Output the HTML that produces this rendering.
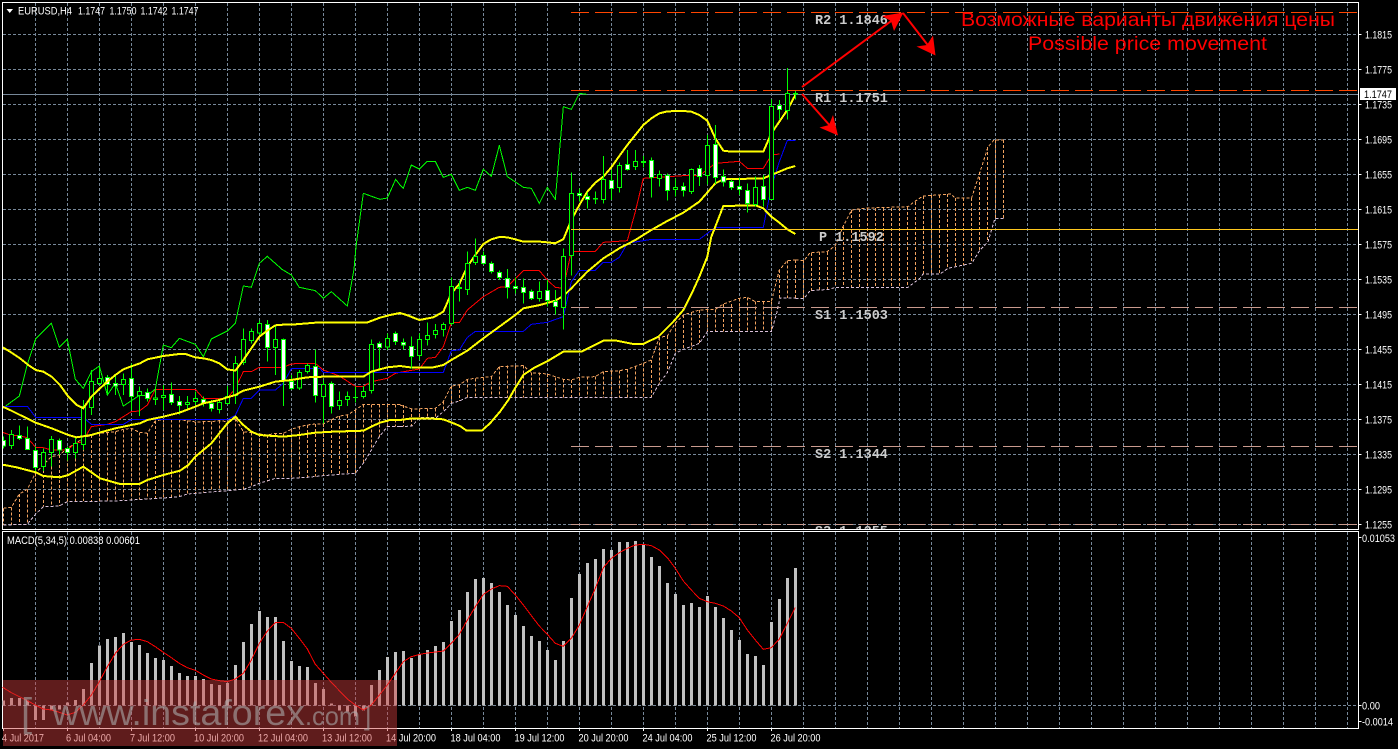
<!DOCTYPE html>
<html><head><meta charset="utf-8"><title>EURUSD,H4</title>
<style>
html,body{margin:0;padding:0;background:#000;width:1398px;height:749px;overflow:hidden}
svg{display:block}
text{font-family:"Liberation Sans",sans-serif;font-size:11px;fill:#fff}
.piv{font-family:"Liberation Mono",monospace;font-weight:bold;font-size:13.5px;fill:#ccc}
</style></head><body>
<svg width="1398" height="749" viewBox="0 0 1398 749" xmlns="http://www.w3.org/2000/svg">
<defs><clipPath id="c1"><rect x="3" y="3" width="1355" height="526"/></clipPath></defs>
<rect width="1398" height="749" fill="#000"/>

<!-- grid -->
<g stroke="#778899" stroke-width="1" stroke-dasharray="3 2" fill="none" shape-rendering="crispEdges">
<path d="M3 34.5H1358M3 69.5H1358M3 104.5H1358M3 139.5H1358M3 174.5H1358M3 209.5H1358M3 244.5H1358M3 279.5H1358M3 314.5H1358M3 349.5H1358M3 384.5H1358M3 419.5H1358M3 454.5H1358M3 489.5H1358M3 524.5H1358M3 705.5H1358"/>
<path d="M35.5 3V529M67.5 3V529M99.5 3V529M131.5 3V529M163.5 3V529M195.5 3V529M227.5 3V529M259.5 3V529M291.5 3V529M323.5 3V529M355.5 3V529M387.5 3V529M419.5 3V529M451.5 3V529M483.5 3V529M515.5 3V529M547.5 3V529M579.5 3V529M611.5 3V529M643.5 3V529M675.5 3V529M707.5 3V529M739.5 3V529M771.5 3V529M803.5 3V529M835.5 3V529M867.5 3V529M899.5 3V529M931.5 3V529M963.5 3V529M995.5 3V529M1027.5 3V529M1059.5 3V529M1091.5 3V529M1123.5 3V529M1155.5 3V529M1187.5 3V529M1219.5 3V529M1251.5 3V529M1283.5 3V529M1315.5 3V529M1347.5 3V529"/>
<path d="M35.5 532V728M67.5 532V728M99.5 532V728M131.5 532V728M163.5 532V728M195.5 532V728M227.5 532V728M259.5 532V728M291.5 532V728M323.5 532V728M355.5 532V728M387.5 532V728M419.5 532V728M451.5 532V728M483.5 532V728M515.5 532V728M547.5 532V728M579.5 532V728M611.5 532V728M643.5 532V728M675.5 532V728M707.5 532V728M739.5 532V728M771.5 532V728M803.5 532V728M835.5 532V728M867.5 532V728M899.5 532V728M931.5 532V728M963.5 532V728M995.5 532V728M1027.5 532V728M1059.5 532V728M1091.5 532V728M1123.5 532V728M1155.5 532V728M1187.5 532V728M1219.5 532V728M1251.5 532V728M1283.5 532V728M1315.5 532V728M1347.5 532V728"/>
</g>
<path d="M3 94.5H1358" stroke="#778899" stroke-width="1" shape-rendering="crispEdges"/>

<!-- ichimoku cloud -->
<g clip-path="url(#c1)" fill="none" shape-rendering="crispEdges">
<g transform="translate(0 270) scale(.33333)" stroke-width="3" stroke-dasharray="9 6">
<path stroke="#f4a460" d="M10.5 715V765M34.5 712V765M58.5 672V765M82.5 658V763M106.5 610V733M130.5 585V710M154.5 560V708M178.5 555V708M202.5 535V695M226.5 520V695M250.5 505V693M274.5 495V693M298.5 490V693M322.5 488V693M346.5 485V693M370.5 478V690M394.5 475V690M418.5 487V688M442.5 490V687M466.5 453V685M490.5 448V684M514.5 449V682M538.5 449V680M562.5 452V672M586.5 456V670M610.5 455V668M634.5 455V665M658.5 452V664M682.5 455V662M706.5 445V660M730.5 485V658M754.5 488V650M778.5 492V640M802.5 495V635M826.5 490V625M850.5 490V625M874.5 478V625M898.5 470V622M922.5 465V622M946.5 462V620M970.5 462V617M994.5 450V615M1018.5 438V613M1042.5 435V611M1066.5 420V610M1090.5 403V580M1114.5 403V540M1138.5 403V500M1162.5 403V470M1186.5 403V470"/>
<polyline stroke="#f4a460" points="10,715 34,712 58,672 82,658 106,610 130,585 154,560 178,555 202,535 226,520 250,505 274,495 298,490 322,488 346,485 370,478 394,475 418,487 442,490 466,453 490,448 514,449 538,449 562,452 586,456 610,455 634,455 658,452 682,455 706,445 730,485 754,488 778,492 802,495 826,490 850,490 874,478 898,470 922,465 946,462 970,462 994,450 1018,438 1042,435 1066,420 1090,403 1200,403"/>
<polyline stroke="#d8bfd8" points="10,765 82,763 106,733 130,710 178,708 202,695 226,695 346,693 394,690 442,687 490,684 538,680 562,672 610,668 658,664 706,660 730,658 754,650 778,640 826,625 874,625 922,622 970,617 1018,613 1066,610 1090,580 1114,540 1138,500 1162,470 1200,470"/>
</g>
<g transform="translate(400 300) scale(.33333)" stroke-width="3" stroke-dasharray="9 6">
<path stroke="#f4a460" d="M10.5 315V380M34.5 327V378M58.5 327V352M82.5 325V352M106.5 325V352M130.5 305V335M154.5 258V310M178.5 255V303M202.5 238V292M226.5 235V292M250.5 232V292M274.5 230V292M298.5 200V292M322.5 197V292M346.5 197V292M370.5 197V292M394.5 218V292M418.5 218V292M442.5 222V292M466.5 232V292M490.5 238V292M514.5 240V292M538.5 232V292M562.5 230V292M586.5 230V292M610.5 215V292M634.5 215V292M658.5 212V292M682.5 208V292M706.5 200V292M730.5 190V292M754.5 180V292M778.5 112V250M802.5 108V218M826.5 70V160M850.5 45V148M874.5 38V148M898.5 30V130M922.5 28V95M946.5 28V95M970.5 12V95M994.5 12V95M1018.5 -5V95M1042.5 -8V95M1066.5 5V95M1090.5 5V95M1114.5 5V95M1138.5 -90V-6M1162.5 -118V-6M1186.5 -120V-6"/>
<polyline stroke="#f4a460" points="0,315 36,327 106,325 130,305 154,258 178,255 202,238 226,235 274,230 298,200 370,197 394,218 442,222 490,238 514,240 538,232 586,230 610,215 658,212 682,208 730,190 754,180 778,112 802,108 826,70 850,45 898,30 946,28 970,12 1018,-5 1042,-8 1066,5 1114,5 1138,-90 1162,-118 1186,-120"/>
<polyline stroke="#d8bfd8" points="0,380 36,378 60,352 110,352 130,335 154,310 178,303 202,292 754,292 778,250 802,218 826,160 850,148 898,130 922,95 1114,95 1130,40 1140,-6 1186,-6"/>
</g>
<g stroke-width="1" stroke-dasharray="3 2">
<path stroke="#f4a460" d="M803.5 260V298M811.5 253V291M819.5 252V290M827.5 252V290M835.5 247V287M843.5 227V287M851.5 210V287M859.5 209V287M867.5 208V287M875.5 208V287M883.5 208V287M891.5 208V287M899.5 208V287M907.5 207V287M915.5 202V282M923.5 196V274M931.5 195V274M939.5 195V274M947.5 194V268M955.5 198V267M963.5 198V265M971.5 198V263M979.5 172V250M987.5 147V242M995.5 140V218M1003.5 140V218"/>
<polyline stroke="#f4a460" points="795.5,260 804,260.7 810,252.7 827,251.7 835,246 843,226.7 851.7,210 866.7,208 908,206.7 913,202.7 923,196 951,194 955,198 971.6,198 980,172 988,147 994,140 1003.5,140"/>
<polyline stroke="#d8bfd8" points="795.5,298.5 804,298.5 810,290.7 830,289.3 835,287.3 908,287.3 920,278.3 923,274 940,274 948,268.3 971.7,263.3 980,250 988,241.7 995,218.3 1004,218.3"/>
</g>
</g>

<!-- indicators -->
<g clip-path="url(#c1)" fill="none" shape-rendering="crispEdges">
<!-- chikou green -->
<g stroke="#00ff00" stroke-width="3">
<polyline transform="translate(0 270) scale(.33333)" points="8,415 58,378 82,283 107,207 154,160 178,232 202,208 226,328 250,355 274,305 298,288 322,375 346,340 370,408 418,376 442,377 466,357 490,225 514,233 538,205 586,223 610,260 634,207 682,183 706,160 730,48 754,52 778,-20"/>
<polyline transform="scale(.33333)" points="778,790 802,769 846,808 874,825 898,862 946,872 970,895 994,875 1042,918 1062,808 1068,740 1090,580 1140,598 1162,594 1187,538 1200,555"/>
<polyline transform="translate(400 80) scale(.33333)" points="0,315 10,325 34,255 58,267 82,244 106,244 130,292 154,283 178,331 202,322 226,331 250,268 274,289 298,196 322,290 370,322 394,325 418,370 442,322 466,358 490,80 514,88 538,40 560,43"/>
</g>
<!-- red tenkan -->
<g stroke="#ff0000" stroke-width="3">
<polyline transform="translate(0 270) scale(.33333)" points="8,487 30,495 60,498 82,503 107,532 130,533 154,540 202,540 226,520 250,515 262,490 274,470 322,463 346,455 370,440 394,425 418,423 442,405 466,358 586,358 610,385 682,385 706,355 730,305 754,305 778,292 850,292 874,282 898,280 946,280 970,300 1018,318 1066,349 1090,349 1114,335 1162,325 1186,310 1200,307"/>
<polyline transform="translate(400 80) scale(.33333)" points="0,877 58,867 82,835 106,832 130,800 154,728 178,728 202,690 250,650 298,622 322,620 370,572 418,572 442,600 466,622 490,625 514,514 586,514 610,487 682,482 706,395 730,295 850,287 898,287 946,250 1018,244 1042,265 1090,265 1114,225 1138,222"/>
</g>
<!-- blue kijun -->
<g stroke="#0000ff" stroke-width="3">
<polyline transform="translate(0 270) scale(.33333)" points="8,410 82,409 107,442 250,442 274,463 370,463 394,449 682,449 706,436 730,385 754,385 778,360 826,360 850,340 874,296 960,296 970,307 1200,307"/>
<polyline transform="translate(400 80) scale(.33333)" points="0,877 130,877 154,812 178,810 202,772 226,754 370,754 394,733 442,727 490,710 514,605 538,571 586,571 610,547 634,547 658,532 682,490 754,478 898,478 946,442 1090,442 1114,322 1138,245 1162,181 1186,181"/>
</g>
<!-- candles -->
<g stroke="#00ff00" stroke-width="3" transform="translate(0 270) scale(.33333)">
<path d="M10.5 500V535M34.5 480V537M58.5 466V510M82.5 470V540M106.5 530V610M130.5 535V603M154.5 498V590M178.5 505V555M202.5 530V572M226.5 500V565M250.5 390V540M274.5 300V435M298.5 290V345M322.5 315V375M346.5 315V375M370.5 310V375M394.5 280V420M418.5 350V438M442.5 355V395M466.5 350V405M490.5 345V420M514.5 337V405M538.5 378V433M562.5 378V420M586.5 365V405M610.5 380V410M634.5 390V425M658.5 385V430M682.5 348V403M706.5 258V402M730.5 175V285M754.5 175V220M778.5 152V195M802.5 150V275M826.5 170V315M850.5 205V408M874.5 315V360M898.5 300V360M922.5 280V310M946.5 238V398M970.5 330V460M994.5 335V430M1018.5 365V420M1042.5 365V408M1066.5 350V398M1090.5 348V385M1114.5 208V370M1138.5 215V300M1162.5 190V240M1186.5 185V225"/>
<path fill="#000" d="M28.5 493h12V527h-12zM124.5 547h12V590h-12zM148.5 508h12V548h-12zM220.5 520h12V548h-12zM244.5 409h12V523h-12zM268.5 334h12V412h-12zM292.5 325h12V340h-12zM364.5 328h12V344h-12zM412.5 364h12V376h-12zM460.5 384h12V389h-12zM484.5 376h12V382h-12zM556.5 398h12V403h-12zM580.5 385h12V394h-12zM652.5 397h12V418h-12zM676.5 379h12V400h-12zM700.5 280h12V376h-12zM724.5 208h12V277h-12zM748.5 184h12V212h-12zM772.5 160h12V189h-12zM820.5 208h12V233h-12zM892.5 307h12V354h-12zM916.5 286h12V304h-12zM964.5 343h12V380h-12zM1012.5 391h12V406h-12zM1036.5 379h12V388h-12zM1060.5 382h12V383h-12zM1084.5 364h12V380h-12zM1108.5 223h12V361h-12zM1156.5 205h12V231h-12z"/>
<path fill="#fff" d="M4.5 512h12V528h-12zM52.5 497h12V505h-12zM76.5 505h12V539h-12zM100.5 541h12V593h-12zM172.5 511h12V540h-12zM196.5 536h12V547h-12zM316.5 322h12V343h-12zM340.5 340h12V348h-12zM388.5 325h12V379h-12zM436.5 367h12V385h-12zM508.5 373h12V397h-12zM532.5 394h12V406h-12zM604.5 389h12V400h-12zM628.5 401h12V415h-12zM796.5 163h12V232h-12zM844.5 208h12V331h-12zM868.5 335h12V355h-12zM940.5 289h12V376h-12zM988.5 340h12V409h-12zM1132.5 220h12V232h-12zM1180.5 191h12V214h-12z"/>
</g>
<!-- bollinger -->
<g stroke="#ffff00" stroke-width="6">
<polyline transform="translate(0 270) scale(.33333)" points="8,232 30,245 60,265 85,285 107,300 130,305 155,320 180,345 205,380 230,405 250,415 274,380 300,355 322,335 346,315 370,298 394,289 420,280 442,268 466,263 490,258 514,255 538,252 556,252 586,262 610,265 634,270 658,280 682,298 706,302 730,270 754,235 778,200 802,182 826,166 850,164 874,164 898,162 922,160 946,158 1100,158 1140,143 1170,135 1200,129"/>
<polyline transform="translate(400 80) scale(.33333)" points="0,699 20,705 58,720 100,712 130,695 154,640 178,612 202,560 226,525 250,492 274,478 298,471 322,472 346,478 370,485 420,485 442,487 466,490 490,478 514,420 538,375 562,335 586,308 610,290 634,262 658,228 682,195 706,165 730,135 754,115 778,100 802,94 850,93 874,95 898,105 922,122 946,175 970,212 994,215 1090,215 1114,160 1138,125 1162,90 1186,45"/>
<polyline transform="translate(0 270) scale(.33333)" points="8,410 30,420 60,435 107,458 155,475 205,495 230,502 274,495 298,488 346,475 394,465 420,460 442,450 490,440 538,428 586,410 610,400 658,390 682,382 706,375 730,362 778,350 826,335 874,330 922,322 970,320 1090,320 1114,305 1162,292 1200,288"/>
<polyline transform="translate(400 80) scale(.33333)" points="0,858 30,862 58,863 100,862 130,855 154,840 202,812 250,775 298,740 346,705 370,685 420,675 466,662 490,648 514,625 562,575 610,535 658,505 706,480 754,450 802,423 850,398 898,365 946,310 970,298 1090,295 1114,285 1138,275 1162,265 1186,258"/>
<polyline transform="translate(0 270) scale(.33333)" points="8,584 50,592 107,607 130,618 180,622 205,615 250,590 300,625 360,642 418,642 442,630 490,615 540,602 565,585 586,560 610,540 634,520 658,490 682,460 706,440 730,465 754,485 778,495 850,500 898,495 946,488 1000,485 1090,482 1114,470 1140,458 1170,450 1200,450"/>
<polyline transform="translate(400 300) scale(.33333)" points="0,360 36,355 84,355 130,358 156,368 180,378 200,392 245,392 270,370 300,335 325,300 345,265 370,225 400,205 440,185 490,155 545,155 610,122 650,122 700,132 730,132 775,110 820,65 850,30 865,0"/>
<polyline transform="translate(400 80) scale(.33333)" points="865,660 880,630 898,590 922,530 934,470 946,440 970,378 1066,376 1090,385 1114,410 1138,428 1162,448 1186,462"/>
</g>
<!-- candles second half on top -->
<g stroke="#00ff00" stroke-width="3" transform="translate(400 80) scale(.33333)">
<path d="M10.5 775V808M34.5 770V865M58.5 760V840M82.5 727V797M106.5 732V775M130.5 727V770M154.5 592V735M178.5 602V665M202.5 514V645M226.5 475V555M250.5 515V555M274.5 545V580M298.5 572V600M322.5 567V655M346.5 592V640M370.5 595V670M394.5 628V660M418.5 605V665M442.5 600V680M466.5 630V703M490.5 505V748M514.5 277V587M538.5 325V365M562.5 337V385M586.5 335V372M610.5 228V370M634.5 270V360M658.5 247V338M682.5 210V272M706.5 210V270M730.5 228V262M754.5 232V353M778.5 272V320M802.5 280V362M826.5 295V350M850.5 308V350M874.5 265V342M898.5 255V318M922.5 165V313M946.5 135V312M970.5 268V320M994.5 298V330M1018.5 292V345M1042.5 310V398M1066.5 290V380M1090.5 285V380M1114.5 58V360M1138.5 60V118M1162.5 -36V118M1186.5 33V58"/>
<path fill="#000" d="M52.5 778h12V827h-12zM76.5 767h12V778h-12zM100.5 751h12V764h-12zM124.5 733h12V748h-12zM148.5 619h12V730h-12zM172.5 622h12V626h-12zM196.5 550h12V628h-12zM220.5 529h12V548h-12zM412.5 634h12V656h-12zM484.5 529h12V683h-12zM508.5 340h12V526h-12zM580.5 355h12V357h-12zM604.5 298h12V358h-12zM652.5 256h12V322h-12zM700.5 244h12V260h-12zM724.5 245h12V247h-12zM772.5 283h12V295h-12zM820.5 322h12V328h-12zM868.5 268h12V334h-12zM916.5 196h12V286h-12zM1060.5 322h12V373h-12zM1108.5 79h12V358h-12zM1156.5 40h12V91h-12zM1180.5 40h12V42h-12z"/>
<path fill="#fff" d="M4.5 787h12V795h-12zM28.5 799h12V829h-12zM244.5 526h12V550h-12zM268.5 550h12V574h-12zM292.5 577h12V592h-12zM316.5 596h12V622h-12zM340.5 619h12V625h-12zM364.5 622h12V638h-12zM388.5 634h12V656h-12zM436.5 631h12V661h-12zM460.5 664h12V679h-12zM532.5 340h12V346h-12zM556.5 349h12V359h-12zM628.5 301h12V325h-12zM676.5 253h12V268h-12zM748.5 241h12V292h-12zM796.5 286h12V331h-12zM844.5 319h12V331h-12zM892.5 265h12V289h-12zM940.5 193h12V292h-12zM964.5 290h12V306h-12zM988.5 304h12V322h-12zM1012.5 319h12V328h-12zM1036.5 331h12V370h-12zM1084.5 319h12V358h-12zM1132.5 76h12V88h-12z"/>
</g>
</g>

<!-- pivot levels -->
<g fill="none" stroke-width="1" shape-rendering="crispEdges">
<path stroke="#ff4500" stroke-dasharray="18 6" d="M571 12.5H1358M571 90.5H1358"/>
<path stroke="#ffc81e" d="M571 229.5H1358"/>
<path stroke="#c99a8e" stroke-dasharray="18 6" d="M571 307.5H1358M571 446.5H1358M571 524.5H1358"/>
</g>
<g clip-path="url(#c1)">
<text class="piv" x="815" y="24">R2 1.1846</text>
<text class="piv" x="815" y="102">R1 1.1751</text>
<text class="piv" x="819" y="241">P 1.1592</text>
<text class="piv" x="815" y="319">S1 1.1503</text>
<text class="piv" x="815" y="458">S2 1.1344</text>
<text class="piv" x="815" y="535">S3 1.1255</text>
</g>

<!-- arrows -->
<g fill="#ff0000" stroke="#ff0000" stroke-linejoin="miter">
<path d="M802 87L898 16M903 13L930 48M802 94L832 128" stroke-width="2" fill="none"/>
<polygon stroke="none" points="903.5,12.5 882,16 891,21 894,31"/>
<polygon stroke="none" points="935.5,55.5 916.5,46.5 927,45 933,35.5"/>
<polygon stroke="none" points="838,135.5 819.5,127.5 829,125 833,115"/>
</g>
<text x="961" y="26" textLength="374" lengthAdjust="spacingAndGlyphs" style="font-size:19px;fill:#ff0000">Возможные варианты движения цены</text>
<text x="1028" y="50" textLength="239" lengthAdjust="spacingAndGlyphs" style="font-size:19px;fill:#ff0000">Possible price movement</text>

<!-- frame -->
<g fill="none" stroke="#fff" stroke-width="1" shape-rendering="crispEdges">
<rect x="2.5" y="2.5" width="1356" height="527"/>
<rect x="2.5" y="531.5" width="1356" height="197"/>
<path d="M1358.5 34.5h3M1358.5 69.5h3M1358.5 104.5h3M1358.5 139.5h3M1358.5 174.5h3M1358.5 209.5h3M1358.5 244.5h3M1358.5 279.5h3M1358.5 314.5h3M1358.5 349.5h3M1358.5 384.5h3M1358.5 419.5h3M1358.5 454.5h3M1358.5 489.5h3M1358.5 524.5h3M1358.5 537.5h3M1358.5 705.5h3M1358.5 721.5h3"/>
<path d="M3.5 728v3M67.5 728v3M131.5 728v3M195.5 728v3M259.5 728v3M323.5 728v3M387.5 728v3M451.5 728v3M515.5 728v3M579.5 728v3M643.5 728v3M707.5 728v3M771.5 728v3"/>
</g>

<!-- header -->
<polygon points="6.5,9 13,9 9.75,13" fill="#fff"/>
<text x="18" y="14.5" textLength="54" lengthAdjust="spacingAndGlyphs">EURUSD,H4</text>
<text x="78" y="14.5" textLength="27" lengthAdjust="spacingAndGlyphs">1.1747</text>
<text x="109.5" y="14.5" textLength="27" lengthAdjust="spacingAndGlyphs">1.1750</text>
<text x="140.5" y="14.5" textLength="27" lengthAdjust="spacingAndGlyphs">1.1742</text>
<text x="171.5" y="14.5" textLength="27" lengthAdjust="spacingAndGlyphs">1.1747</text>

<!-- price scale -->
<g>
<text x="1365" y="38.5" textLength="27" lengthAdjust="spacingAndGlyphs">1.1815</text>
<text x="1365" y="73.5" textLength="27" lengthAdjust="spacingAndGlyphs">1.1775</text>
<text x="1365" y="108.5" textLength="27" lengthAdjust="spacingAndGlyphs">1.1735</text>
<text x="1365" y="143.5" textLength="27" lengthAdjust="spacingAndGlyphs">1.1695</text>
<text x="1365" y="178.5" textLength="27" lengthAdjust="spacingAndGlyphs">1.1655</text>
<text x="1365" y="213.5" textLength="27" lengthAdjust="spacingAndGlyphs">1.1615</text>
<text x="1365" y="248.5" textLength="27" lengthAdjust="spacingAndGlyphs">1.1575</text>
<text x="1365" y="283.5" textLength="27" lengthAdjust="spacingAndGlyphs">1.1535</text>
<text x="1365" y="318.5" textLength="27" lengthAdjust="spacingAndGlyphs">1.1495</text>
<text x="1365" y="353.5" textLength="27" lengthAdjust="spacingAndGlyphs">1.1455</text>
<text x="1365" y="388.5" textLength="27" lengthAdjust="spacingAndGlyphs">1.1415</text>
<text x="1365" y="423.5" textLength="27" lengthAdjust="spacingAndGlyphs">1.1375</text>
<text x="1365" y="458.5" textLength="27" lengthAdjust="spacingAndGlyphs">1.1335</text>
<text x="1365" y="493.5" textLength="27" lengthAdjust="spacingAndGlyphs">1.1295</text>
<text x="1365" y="528.5" textLength="27" lengthAdjust="spacingAndGlyphs">1.1255</text>
<rect x="1360" y="88" width="36" height="12" fill="#fff"/>
<text x="1364" y="98" textLength="28" lengthAdjust="spacingAndGlyphs" style="fill:#000">1.1747</text>
<text x="1362" y="542" textLength="33" lengthAdjust="spacingAndGlyphs">0.01053</text>
<text x="1362" y="709.5" textLength="18" lengthAdjust="spacingAndGlyphs">0.00</text>
<text x="1362" y="725.5" textLength="31" lengthAdjust="spacingAndGlyphs">-0.0014</text>
</g>

<!-- MACD -->
<text x="7" y="544" textLength="133" lengthAdjust="spacingAndGlyphs">MACD(5,34,5) 0.00838 0.00601</text>
<g fill="none" shape-rendering="crispEdges">
<path transform="translate(0 525) scale(.33333)" stroke="#c0c0c0" stroke-width="9" d="M10.5 541V527M34.5 541V519M58.5 541V519M82.5 541V527M106.5 541V585M130.5 541V585M154.5 541V553M178.5 541V553M202.5 541V533M226.5 541V525M250.5 541V492M274.5 541V414M298.5 541V362M322.5 541V342M346.5 541V336M370.5 541V324M394.5 541V351M418.5 541V360M442.5 541V384M466.5 541V399M490.5 541V405M514.5 541V423M538.5 541V444M562.5 541V453M586.5 541V453M610.5 541V462M634.5 541V477M658.5 541V480M682.5 541V474M706.5 541V420M730.5 541V351M754.5 541V297M778.5 541V258M802.5 541V276M826.5 541V276M850.5 541V348M874.5 541V408M898.5 541V423M922.5 541V426M946.5 541V474M970.5 541V492M994.5 541V535M1018.5 541V557M1042.5 541V560M1066.5 541V575M1090.5 541V557M1114.5 541V480M1138.5 541V435M1162.5 541V396M1186.5 541V381M1210.5 541V378M1234.5 541V399"/>
<path transform="translate(420 525) scale(.33333)" stroke="#c0c0c0" stroke-width="9" d="M-1.5 541V387M22.5 541V375M46.5 541V363M70.5 541V351M94.5 541V288M118.5 541V255M142.5 541V201M166.5 541V162M190.5 541V159M214.5 541V174M238.5 541V201M262.5 541V240M286.5 541V270M310.5 541V303M334.5 541V333M358.5 541V348M382.5 541V375M406.5 541V405M430.5 541V348M454.5 541V219M478.5 541V147M502.5 541V114M526.5 541V102M550.5 541V72M574.5 541V75M598.5 541V51M622.5 541V51M646.5 541V48M670.5 541V60M694.5 541V96M718.5 541V123M742.5 541V174M766.5 541V207M790.5 541V240M814.5 541V234M838.5 541V246M862.5 541V213M886.5 541V246M910.5 541V279M934.5 541V315M958.5 541V345M982.5 541V387M1006.5 541V393M1030.5 541V420M1054.5 541V291M1078.5 541V222M1102.5 541V159M1126.5 541V129"/>
<polyline transform="translate(0 525) scale(.33333)" stroke="#ff0000" stroke-width="3" points="8,487 34,503 58,515 82,527 106,540 130,552 154,555 178,562 202,570 226,562 250,540 274,510 298,470 322,425 346,385 370,358 394,345 418,343 442,350 466,365 490,382 514,398 538,415 562,428 586,436 610,450 634,462 658,467 682,470 706,462 730,445 754,405 778,355 802,318 826,293 850,292 874,310 898,340 922,372 946,418 970,445 994,472 1018,497 1042,522 1066,540 1090,555 1114,540 1138,510 1162,480 1186,445 1210,410 1234,395 1260,388"/>
<polyline transform="translate(420 525) scale(.33333)" stroke="#ff0000" stroke-width="3" points="0,388 22,384 46,381 70,378 94,355 118,328 142,285 166,245 190,208 214,192 238,182 262,184 286,210 310,240 334,272 358,303 382,328 406,355 430,364 454,340 478,300 502,245 526,190 550,128 574,100 598,83 622,70 646,60 670,58 694,62 718,75 742,98 766,130 790,168 814,195 838,220 862,230 886,235 910,243 934,258 958,278 982,315 1006,345 1030,373 1054,368 1078,342 1102,295 1126,247"/>
</g>

<!-- time axis -->
<g>
<text x="2" y="741.5" textLength="42" lengthAdjust="spacingAndGlyphs">4 Jul 2017</text>
<text x="66" y="741.5" textLength="45" lengthAdjust="spacingAndGlyphs">6 Jul 04:00</text>
<text x="130" y="741.5" textLength="45" lengthAdjust="spacingAndGlyphs">7 Jul 12:00</text>
<text x="194" y="741.5" textLength="50" lengthAdjust="spacingAndGlyphs">10 Jul 20:00</text>
<text x="258" y="741.5" textLength="50" lengthAdjust="spacingAndGlyphs">12 Jul 04:00</text>
<text x="322" y="741.5" textLength="50" lengthAdjust="spacingAndGlyphs">13 Jul 12:00</text>
<text x="386" y="741.5" textLength="50" lengthAdjust="spacingAndGlyphs">14 Jul 20:00</text>
<text x="450.5" y="741.5" textLength="50" lengthAdjust="spacingAndGlyphs">18 Jul 04:00</text>
<text x="514.5" y="741.5" textLength="50" lengthAdjust="spacingAndGlyphs">19 Jul 12:00</text>
<text x="578.5" y="741.5" textLength="50" lengthAdjust="spacingAndGlyphs">20 Jul 20:00</text>
<text x="642.5" y="741.5" textLength="50" lengthAdjust="spacingAndGlyphs">24 Jul 04:00</text>
<text x="706.5" y="741.5" textLength="50" lengthAdjust="spacingAndGlyphs">25 Jul 12:00</text>
<text x="770.5" y="741.5" textLength="50" lengthAdjust="spacingAndGlyphs">26 Jul 20:00</text>
</g>

<!-- watermark -->
<rect x="3" y="680" width="394" height="66" fill="rgb(208,60,60)" fill-opacity=".46"/>
<g fill-opacity=".6">
<text x="21" y="726" style="font-size:40px;fill:#aaa">[</text>
<text x="52" y="725" textLength="253" lengthAdjust="spacingAndGlyphs" style="font-size:36px;fill:#aaa">www.instaforex</text>
<text x="305" y="725" textLength="55" lengthAdjust="spacingAndGlyphs" style="font-size:26px;fill:#aaa">.com</text>
<text x="364" y="725" style="font-size:26px;fill:#aaa">]</text>
</g>
</svg>
</body></html>
